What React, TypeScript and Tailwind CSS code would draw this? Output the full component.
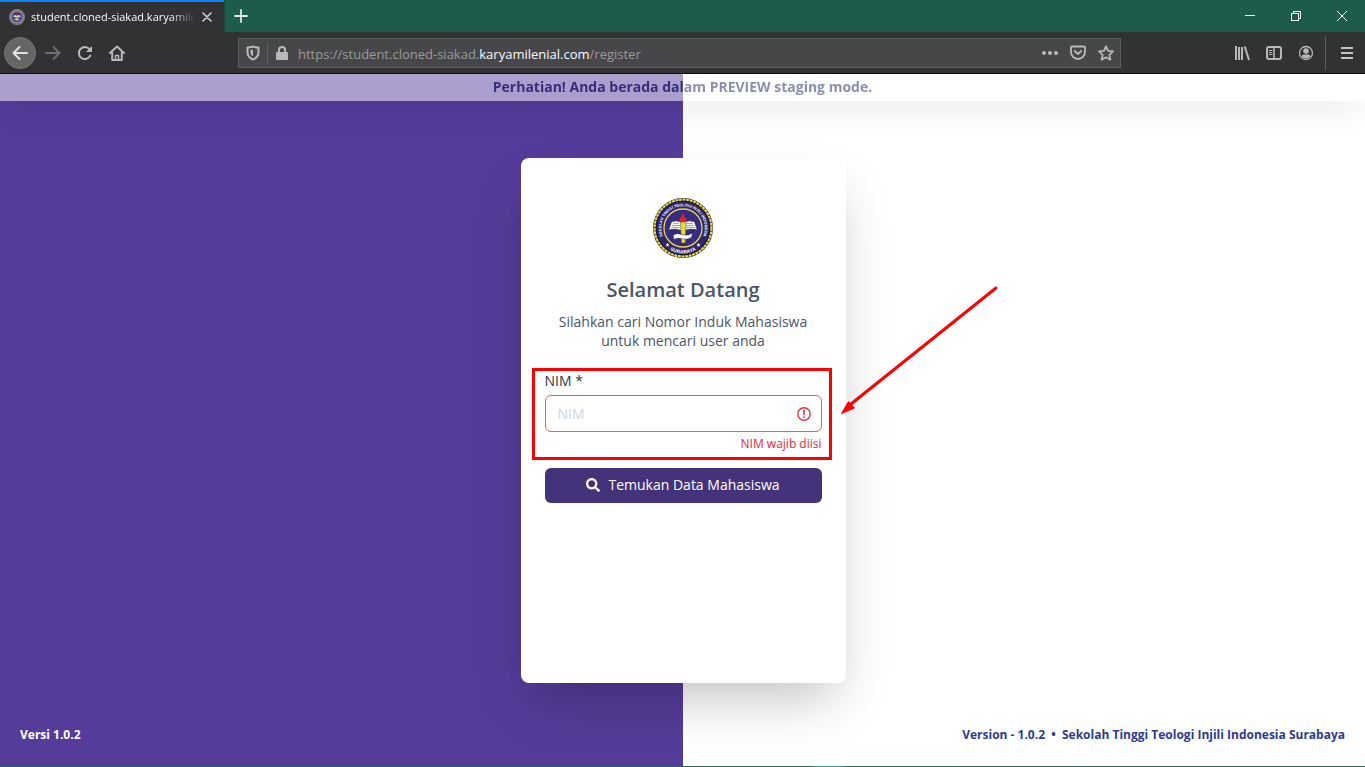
import React, { useState } from "react";
import { FaSearch } from "react-icons/fa";

const ui = "font-['Open_Sans','Noto_Sans',sans-serif]";

function SealArt() {
  return (
    <>
      <circle cx="30" cy="30" r="19" fill="#382b80" stroke="#e6d94a" strokeWidth="1.3" />
      <path d="M15.500 32l3-8.500q6-2 10.500 1 7-3 12.500-1l3 8.500q-8-2-14.500 1-7-3-14.500-1z" fill="#f4f4ef" stroke="#1e1a38" strokeWidth=".7" />
      <path d="M20 25.500h6M19 27.500h8M18.500 29.500h8M33 25.500h7M33 27.500h8M33 29.500h9" stroke="#77747d" strokeWidth=".6" />
      <path d="M27.500 24h5.500l-.7 21h-4z" fill="#e6dc35" stroke="#2a2250" strokeWidth=".4" />
      <path d="M27 24q-1.500-3.500 1-5 1-1 1-3.500 3 2 2 3.500 2.500 0 2.500 3l-.8 2z" fill="#d82535" />
      <path d="M20 37.500q3-3 8.500-1 6 2 11-1.500l-1 4.500q-5 3-10.500 1-4-1-7 1z" fill="#fff" stroke="#28213e" strokeWidth=".5" />
    </>
  );
}

function Seal() {
  return (
    <svg width="60" height="60" viewBox="0 0 60 60" aria-hidden="true" className="shrink-0">
      <defs>
        <path id="seal-top" d="M14.600 45.400A21.800 21.800 0 1 1 45.400 45.400" />
        <path id="seal-low" d="M7.900 42.750A25.500 25.500 0 0 0 52.100 42.750" />
      </defs>
      <circle cx="30" cy="30" r="29" fill="#2b2263" stroke="#33302c" strokeWidth="2" />
      <circle cx="30" cy="30" r="28.4" fill="none" stroke="#e6d94a" strokeWidth="2.200" strokeDasharray="2.8 .8" />
      <circle cx="30" cy="30" r="26.800" fill="#30266b" stroke="#191536" strokeWidth="1" />
      <text fill="#ffffff" fontSize="3.8" fontWeight="700" fontFamily="Liberation Sans, sans-serif" textAnchor="middle">
        <textPath href="#seal-top" startOffset="50%">SEKOLAH TINGGI TEOLOGI INJILI INDONESIA</textPath>
      </text>
      <text fill="#ffffff" fontSize="5" fontWeight="700" fontFamily="Liberation Sans, sans-serif" textAnchor="middle">
        <textPath href="#seal-low" startOffset="50%">SURABAYA</textPath>
      </text>
      <path d="M14.500 44.800l.6 1.400 1.400.1-1.100 1 .4 1.500-1.300-.8-1.300.8.4-1.500-1.100-1 1.400-.1zM45.500 44.800l.6 1.400 1.400.1-1.100 1 .4 1.500-1.300-.8-1.300.8.4-1.500-1.100-1 1.400-.1z" fill="#fff" />
      <SealArt />
    </svg>
  );
}

function Favicon() {
  return (
    <svg width="16" height="16" viewBox="0 0 60 60" aria-hidden="true" className="shrink-0">
      <circle cx="30" cy="30" r="28" fill="#6a5f9a" stroke="#8b8468" strokeWidth="4" />
      <circle cx="30" cy="30" r="23" fill="none" stroke="#9a93ba" strokeWidth="4" strokeDasharray="4 3" />
      <SealArt />
    </svg>
  );
}

function IconButton({ label, children, className = "w-8 text-[#b9b9ba]" }: { label: string; children: React.ReactNode; className?: string }) {
  return (
    <button type="button" aria-label={label} className={"flex h-8 shrink-0 items-center justify-center " + className}>
      {children}
    </button>
  );
}

function TitleBar() {
  return (
    <div className="flex h-8 bg-[#1d5c4a]">
      <div className="flex w-56 items-center gap-1.5 border-t-2 border-[#0a84ff] bg-[#323234] pl-[9px]">
        <Favicon />
        <span className="min-w-0 flex-1 overflow-hidden text-[11px] leading-5 whitespace-nowrap text-[#f9f9fa] [mask-image:linear-gradient(to_right,#000_84%,transparent)]">
          student.cloned-siakad.karyamilenial.com
        </span>
        <button type="button" aria-label="Tutup tab" className="mr-3 text-[#d0d0d1]">
          <svg width="10" height="10" viewBox="0 0 10 10" fill="none" stroke="currentColor" strokeWidth="1.6" strokeLinecap="round"><path d="M1 1l8 8M9 1l-8 8" /></svg>
        </button>
      </div>
      <button type="button" aria-label="Tab baru" className="flex w-8 items-center justify-center border-l border-[#164a3b] text-[#e0e8e5]">
        <svg width="14" height="14" viewBox="0 0 14 14" fill="none" stroke="currentColor" strokeWidth="1.8" strokeLinecap="round"><path d="M7 1v12M1 7h12" /></svg>
      </button>
      <div className="ml-auto flex text-white">
        <button type="button" aria-label="Minimalkan" className="flex w-[46px] items-center justify-center">
          <svg width="10" height="10" viewBox="0 0 10 10" stroke="currentColor" shapeRendering="crispEdges"><path d="M0 4.5h10" /></svg>
        </button>
        <button type="button" aria-label="Pulihkan" className="flex w-[46px] items-center justify-center">
          <svg width="10" height="10" viewBox="0 0 10 10" fill="none" stroke="currentColor" shapeRendering="crispEdges"><path d="M.5 2.5h7v7h-7zM2.5 2.5v-2h7v7h-2" /></svg>
        </button>
        <button type="button" aria-label="Tutup" className="flex w-[46px] items-center justify-center">
          <svg width="10" height="10" viewBox="0 0 10 10" fill="none" stroke="currentColor"><path d="M0 0l10 10M10 0L0 10" /></svg>
        </button>
      </div>
    </div>
  );
}

function Toolbar() {
  const inBar = "w-7 text-[#b9b9ba]";
  return (
    <div className="flex h-[42px] items-center border-b border-[#0c0c0d] bg-[#323234]">
      <IconButton label="Kembali" className="mr-px ml-1 w-8 rounded-full border border-[#767677] bg-[#666667] text-[#e3e3e3]">
        <svg width="16" height="16" viewBox="0 0 16 16" fill="none" stroke="currentColor" strokeWidth="2" strokeLinecap="round" strokeLinejoin="round"><path d="M15 8H1.5M7.5 2l-6 6 6 6" /></svg>
      </IconButton>
      <IconButton label="Maju" className="w-8 text-[#6f6f71]">
        <svg width="16" height="16" viewBox="0 0 16 16" fill="none" stroke="currentColor" strokeWidth="1.8" strokeLinecap="round" strokeLinejoin="round"><path d="M1 8h13.500M8.500 2l6 6-6 6" /></svg>
      </IconButton>
      <IconButton label="Muat ulang">
        <svg width="16" height="16" viewBox="0 0 16 16" fill="none" stroke="currentColor" strokeWidth="2"><path d="M13.300 10.600A6 6 0 1 1 12.500 4.200L14 6" strokeLinecap="round" /><path d="M15 1v6H9z" fill="currentColor" stroke="none" /></svg>
      </IconButton>
      <IconButton label="Beranda">
        <svg width="16" height="16" viewBox="0 0 16 16" fill="none" stroke="currentColor" strokeWidth="2" strokeLinecap="round" strokeLinejoin="round"><path d="M1 8l7-6.500L15 8M3.200 7.500V15h9.600V7.500" /><path d="M6.500 15v-4.500h3V15" strokeWidth="1.400" /></svg>
      </IconButton>
      <div className="ml-[105px] flex h-[30px] min-w-0 flex-1 items-center border border-[#5b5b5d] bg-[#474749]">
        <IconButton label="Perlindungan pelacakan" className={inBar}>
          <svg width="14" height="16" viewBox="0 0 14 16" fill="none" stroke="currentColor" strokeWidth="2" strokeLinejoin="round"><path d="M7 1.500c2 .8 3.500 1 5.500 1V7c0 3.500-2 6-5.500 7.500C3.500 13 1.500 10.500 1.500 7V2.500c2 0 3.500-.2 5.500-1z" /><path d="M7 4.500v7C5 10.300 4.500 8.500 4.500 7V5c1 0 1.700-.2 2.500-.5z" fill="currentColor" stroke="none" /></svg>
        </IconButton>
        <span className="h-[22px] w-px bg-[#5f5f61]" />
        <IconButton label="Informasi situs" className={inBar}>
          <svg width="12" height="14" viewBox="0 0 12 14" fill="none" stroke="currentColor" strokeWidth="2"><path d="M3 7V4a3 3 0 0 1 6 0v3" /><rect x="0" y="6" width="12" height="8" rx="1" fill="currentColor" stroke="none" /></svg>
        </IconButton>
        <p className="min-w-0 flex-1 truncate pt-1 pl-0.5 text-[13px] text-[#9a9a9b]">
          https://student.cloned-siakad.<span className="text-[#f9f9fa]">karyamilenial.com</span>/register
        </p>
        <IconButton label="Tindakan halaman" className={inBar}>
          <svg width="16" height="4" viewBox="0 0 16 4" fill="currentColor"><circle cx="2" cy="2" r="2" /><circle cx="8" cy="2" r="2" /><circle cx="14" cy="2" r="2" /></svg>
        </IconButton>
        <IconButton label="Simpan ke Pocket" className={inBar}>
          <svg width="16" height="16" viewBox="0 0 16 16" fill="none" stroke="currentColor" strokeWidth="1.800" strokeLinecap="round" strokeLinejoin="round"><path d="M2 1.500h12a1 1 0 0 1 1 1V7A7 7 0 0 1 1 7V2.500a1 1 0 0 1 1-1z" /><path d="M4.700 6L8 9l3.300-3" /></svg>
        </IconButton>
        <IconButton label="Markah halaman" className={inBar}>
          <svg width="16" height="16" viewBox="0 0 16 16" fill="none" stroke="currentColor" strokeWidth="1.800" strokeLinejoin="round"><path d="M8 1.300l2.100 4.500 4.900.6-3.600 3.400.9 4.900L8 12.300l-4.300 2.400.9-4.900L1 6.400l4.900-.6z" /></svg>
        </IconButton>
      </div>
      <div className="ml-[105px] flex items-center">
        <IconButton label="Pustaka">
          <svg width="16" height="16" viewBox="0 0 16 16" fill="none" stroke="currentColor" strokeWidth="2"><path d="M2 1v14M5 2v13M8 2v13M10.700 1.500L15 15" /></svg>
        </IconButton>
        <IconButton label="Bilah samping">
          <svg width="16" height="14" viewBox="0 0 16 14" fill="none" stroke="currentColor"><rect x="1" y="1" width="14" height="12" rx="2" strokeWidth="2" /><path d="M8 2v10" strokeWidth="1.500" /><path d="M3 4.500h3.500M3 6.500h3M3 8.500h3.500" /></svg>
        </IconButton>
        <IconButton label="Akun">
          <svg width="16" height="16" viewBox="0 0 16 16"><circle cx="8" cy="8" r="6.500" fill="none" stroke="currentColor" strokeWidth="1.300" /><circle cx="8" cy="6" r="2.800" fill="currentColor" /><path d="M3.800 11.500q0-2 2-2h4.400q2 0 2 2Q10.500 13.600 8 13.600T3.800 11.500z" fill="currentColor" /></svg>
        </IconButton>
        <span className="mr-[5px] ml-[3px] h-[34px] w-px bg-[#5b5b5d]" />
        <IconButton label="Menu" className="mr-0.5 w-8 text-[#c4c4c5]">
          <svg width="12" height="12" viewBox="0 0 12 12" fill="none" stroke="currentColor" strokeWidth="2"><path d="M0 1h12M0 6h12M0 11h12" /></svg>
        </IconButton>
      </div>
    </div>
  );
}

function RegisterCard() {
  const [nim, setNim] = useState("");
  return (
    <section className="relative min-h-[525px] w-[325px] rounded-lg bg-white px-6 pt-10 shadow-[0_25px_50px_-12px_rgba(0,0,0,0.25)]">
      <div className="flex justify-center"><Seal /></div>
      <h1 className="mt-4 text-center text-xl leading-8 font-semibold text-[#4a5568]">Selamat Datang</h1>
      <p className="mt-1.5 text-center text-sm leading-[19px] text-[#4a5568]">
        Silahkan cari Nomor Induk Mahasiswa<br />untuk mencari user anda
      </p>
      <form onSubmit={(e) => e.preventDefault()} className="mt-[19px]">
        <div className="relative">
          <label htmlFor="nim" className="mb-0.5 block text-sm leading-6 text-[#2d3748]">NIM *</label>
          <div className="relative">
            <input
              id="nim"
              value={nim}
              onChange={(e) => setNim(e.target.value)}
              placeholder="NIM"
              aria-invalid="true"
              aria-describedby="nim-error"
              className="block h-[37px] w-full rounded-md border border-[#e85d68] bg-white pr-10 pl-3 text-sm text-[#2d3748] outline-none placeholder:text-[#cbd5e0]"
            />
            <svg width="14" height="14" viewBox="0 0 14 14" fill="none" stroke="#dc3545" aria-hidden="true" className="absolute top-3 right-[11px]">
              <circle cx="7" cy="7" r="6.200" strokeWidth="1.400" /><path d="M7 3.300v4.500" strokeWidth="1.600" strokeLinecap="round" /><circle cx="7" cy="10.200" r=".9" fill="#dc3545" stroke="none" />
            </svg>
          </div>
          <p id="nim-error" className="text-right text-xs leading-6 text-[#e3273c]">NIM wajib diisi</p>
          <div aria-hidden="true" className="pointer-events-none absolute -top-px -right-2.5 -bottom-1 -left-[13px] border-[3px] border-[#ff0000]" />
        </div>
        <button type="submit" className="mt-3 flex h-[35px] w-full items-center justify-center gap-2 rounded-md bg-[#44337a] text-sm text-white">
          <FaSearch className="size-3.5" />
          Temukan Data Mahasiswa
        </button>
      </form>
      <svg width="160" height="132" viewBox="0 0 160 132" aria-hidden="true" className="pointer-events-none absolute top-[126px] left-[319px]">
        <path d="M156 4L11 120" stroke="#ff0000" strokeWidth="3" strokeLinecap="round" />
        <path d="M1.500 129.500L8.500 117.500L10 119.500L14.500 124z" fill="#ff0000" stroke="#ff0000" />
      </svg>
    </section>
  );
}

export default function App() {
  return (
    <div className={"flex min-h-screen flex-col " + ui}>
      <TitleBar />
      <Toolbar />
      <div className="flex flex-1 flex-col overflow-hidden bg-[linear-gradient(to_right,#553c9a_calc(50%+1px),#ffffff_calc(50%+1px))]">
        <div className="bg-white pb-px text-center text-sm leading-[26px] font-bold text-[#162062] opacity-50 shadow-[0_12px_30px_-6px_rgba(0,0,0,0.25)]">
          Perhatian! Anda berada dalam PREVIEW staging mode.
        </div>
        <main className="flex flex-1 items-center justify-center pt-[14px] pl-px">
          <RegisterCard />
        </main>
        <footer className="flex items-center justify-between px-5 pb-[21px] text-xs leading-5 font-bold">
          <p className="text-white">Versi 1.0.2</p>
          <p className="text-[#2c3a94]">Version - 1.0.2 &nbsp;•&nbsp; Sekolah Tinggi Teologi Injili Indonesia Surabaya</p>
        </footer>
      </div>
      <div className="flex h-px bg-[#2c6b5b] pl-[813px]">
        <span className="w-8 bg-[#2f9d80]" />
      </div>
    </div>
  );
}
